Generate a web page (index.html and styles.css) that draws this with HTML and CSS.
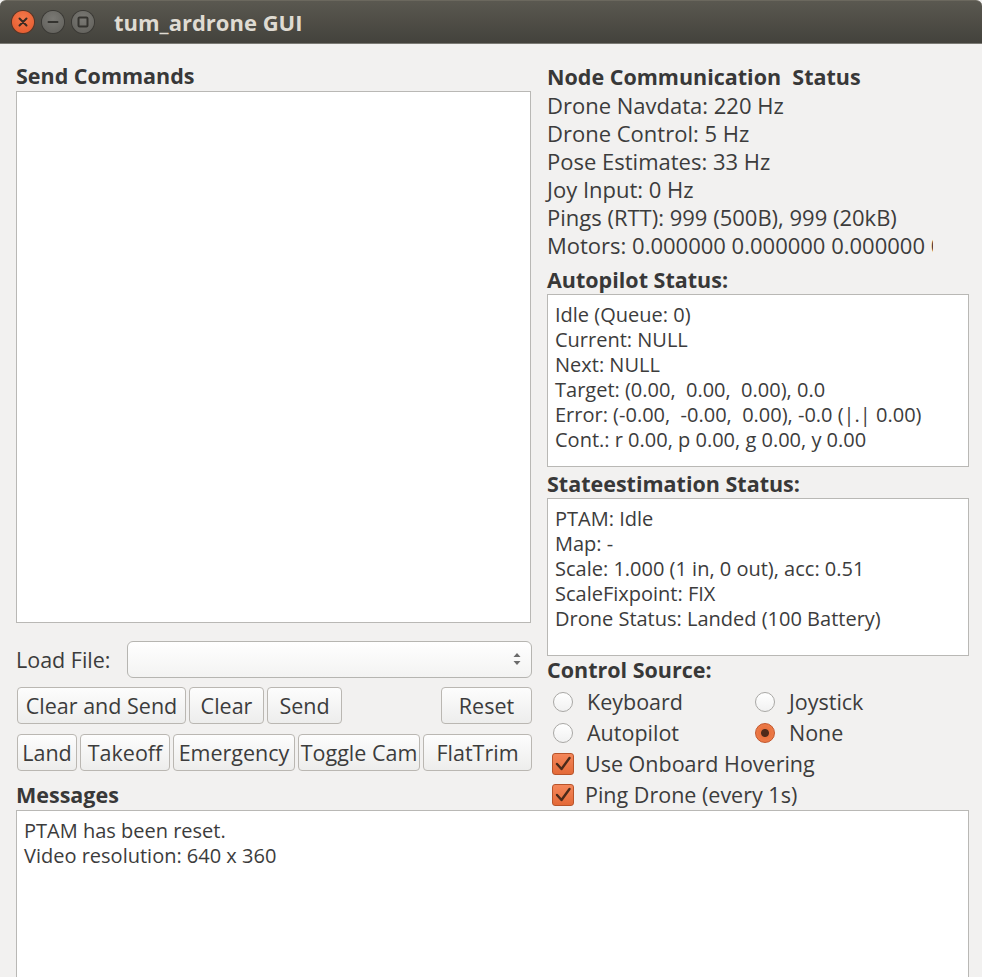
FILE: index.html
```html
<!DOCTYPE html>
<html>
<head>
<meta charset="utf-8">
<title>tum_ardrone GUI</title>
<link rel="stylesheet" href="styles.css">
</head>
<body>
<div class="window">
  <div class="titlebar">
    <div class="wbtns">
      <span class="wbtn close"><svg viewBox="0 0 22 22" width="22" height="22"><path d="M7.5 7.5 L14.5 14.5 M14.5 7.5 L7.5 14.5" stroke="#3a2a22" stroke-width="2" stroke-linecap="round"/></svg></span>
      <span class="wbtn"><svg viewBox="0 0 22 22" width="22" height="22"><path d="M6.5 11 H15.5" stroke="#34332f" stroke-width="2" stroke-linecap="round"/></svg></span>
      <span class="wbtn"><svg viewBox="0 0 22 22" width="22" height="22"><rect x="6.5" y="6.5" width="9" height="9" rx="1" fill="none" stroke="#34332f" stroke-width="2"/></svg></span>
    </div>
    <div class="title">tum_ardrone GUI</div>
  </div>
  <div class="content">
    <div class="top">
      <div class="left">
        <div class="heading">Send Commands</div>
        <div class="textbox cmds"></div>
        <div class="loadrow">
          <span class="label">Load File:</span>
          <div class="combo">
            <svg class="spin" viewBox="0 0 10 20" width="10" height="20"><path d="M1.5 8 L5 4 L8.5 8 Z M1.5 12 L5 16 L8.5 12 Z" fill="#6b6b6b"/></svg>
          </div>
        </div>
        <div class="btnrow row1">
          <button class="btn">Clear and Send</button>
          <button class="btn">Clear</button>
          <button class="btn">Send</button>
          <span></span>
          <button class="btn">Reset</button>
        </div>
        <div class="btnrow row2">
          <button class="btn">Land</button>
          <button class="btn">Takeoff</button>
          <button class="btn">Emergency</button>
          <button class="btn">Toggle Cam</button>
          <button class="btn">FlatTrim</button>
        </div>
        <div class="heading msgh">Messages</div>
      </div>
      <div class="right">
        <div class="heading">Node Communication&nbsp; Status</div>
        <div class="line">Drone Navdata: 220 Hz</div>
        <div class="line">Drone Control: 5 Hz</div>
        <div class="line">Pose Estimates: 33 Hz</div>
        <div class="line">Joy Input: 0 Hz</div>
        <div class="line">Pings (RTT): 999 (500B), 999 (20kB)</div>
        <div class="line clip">Motors: 0.000000 0.000000 0.000000 0.000000</div>
        <div class="heading sub first">Autopilot Status:</div>
        <div class="textbox status auto">
          <div>Idle (Queue: 0)</div>
          <div>Current: NULL</div>
          <div>Next: NULL</div>
          <div>Target: (0.00,&nbsp; 0.00,&nbsp; 0.00), 0.0</div>
          <div>Error: (-0.00,&nbsp; -0.00,&nbsp; 0.00), -0.0 (|.| 0.00)</div>
          <div>Cont.: r 0.00, p 0.00, g 0.00, y 0.00</div>
        </div>
        <div class="heading sub">Stateestimation Status:</div>
        <div class="textbox status state">
          <div>PTAM: Idle</div>
          <div>Map: -</div>
          <div>Scale: 1.000 (1 in, 0 out), acc: 0.51</div>
          <div>ScaleFixpoint: FIX</div>
          <div>Drone Status: Landed (100 Battery)</div>
        </div>
        <div class="heading sub last">Control Source:</div>
        <div class="radios">
          <div class="opt"><span class="radio"></span>Keyboard</div>
          <div class="opt"><span class="radio"></span>Joystick</div>
          <div class="opt"><span class="radio"></span>Autopilot</div>
          <div class="opt"><span class="radio on"></span>None</div>
        </div>
        <div class="opt"><span class="check"><svg viewBox="0 0 22 22" width="22" height="22"><path d="M5 11 L9.5 16 L17.5 5" fill="none" stroke="#4a2a1a" stroke-width="2.4" stroke-linecap="round" stroke-linejoin="round"/></svg></span>Use Onboard Hovering</div>
        <div class="opt"><span class="check"><svg viewBox="0 0 22 22" width="22" height="22"><path d="M5 11 L9.5 16 L17.5 5" fill="none" stroke="#4a2a1a" stroke-width="2.4" stroke-linecap="round" stroke-linejoin="round"/></svg></span>Ping Drone (every 1s)</div>
      </div>
    </div>
    <div class="textbox messages">
      <div>PTAM has been reset.</div>
      <div>Video resolution: 640 x 360</div>
    </div>
  </div>
</div>
</body>
</html>
```

FILE: styles.css
```css
html, body {
  margin: 0;
  padding: 0;
  height: 100%;
  overflow: hidden;
  background: #f2f1f0;
}
.window {
  font-family: "Open Sans", "Noto Sans", sans-serif;
  font-size: 21.5px;
  color: #3c3c3c;
  height: 977px;
  display: flex;
  flex-direction: column;
}
.titlebar {
  height: 42px;
  flex: none;
  background: linear-gradient(#5a5850, #43423c);
  border-top: 1px solid #6b685e;
  border-bottom: 1px solid #7b7a74;
  display: flex;
  align-items: center;
  border-radius: 6px 6px 0 0;
}
.wbtns {
  display: flex;
  gap: 8px;
  padding-left: 12px;
}
.wbtn {
  width: 22px;
  height: 22px;
  border-radius: 50%;
  background: radial-gradient(circle at 50% 35%, #7a7974, #5f5e59);
  box-shadow: 0 0 0 1px #3a3935;
  display: flex;
}
.wbtn.close {
  background: radial-gradient(circle at 50% 35%, #f47a4c, #e4562a);
  box-shadow: 0 0 0 1px #5a3322;
}
.title {
  margin-left: 20px;
  font-weight: bold;
  font-size: 22px;
  color: #dfdbd2;
}
.content {
  flex: 1;
  padding: 0 13px 0 16px;
  display: flex;
  flex-direction: column;
  min-height: 0;
}
.top {
  display: grid;
  grid-template-columns: 516px 422px;
  column-gap: 15px;
  flex: none;
}
.heading {
  font-weight: bold;
  font-size: 21.5px;
  height: 28px;
  line-height: 28px;
  white-space: nowrap;
  color: #383838;
}
.left {
  display: flex;
  flex-direction: column;
  padding-top: 18px;
}
.left > .heading:first-child {
  height: 29px;
}
.right {
  padding-top: 19px;
  display: flex;
  flex-direction: column;
  font-size: 22px;
}
.textbox {
  background: #ffffff;
  border: 1px solid #b9b8b5;
  box-sizing: border-box;
}
.cmds {
  height: 532px;
  width: 515px;
}
.loadrow {
  display: flex;
  align-items: center;
  margin-top: 17px;
  height: 38px;
}
.label {
  width: 111px;
  flex: none;
}
.combo {
  flex: 1;
  height: 37px;
  box-sizing: border-box;
  border: 1px solid #b6b5b1;
  border-radius: 6px;
  background: linear-gradient(#ffffff, #f3f3f2);
  display: flex;
  align-items: center;
  justify-content: flex-end;
  padding-right: 9px;
}
.btnrow {
  display: grid;
  column-gap: 3px;
  margin-top: 10px;
  height: 37px;
  margin-left: 1px;
}
.row1 {
  grid-template-columns: 169px 75px 75px 1fr 91px;
  margin-top: 9px;
}
.row2 {
  grid-template-columns: 60px 90px 122px 122px 1fr;
}
.btn {
  font: inherit;
  color: #3c3c3c;
  height: 37px;
  padding: 0;
  border: 1px solid #bab7b2;
  border-radius: 4px;
  background: linear-gradient(#fdfdfd, #ededec);
  white-space: nowrap;
  overflow: hidden;
}
.msgh {
  margin-top: 10px;
  height: 27px;
  line-height: 27px;
}
.line {
  height: 28px;
  line-height: 28px;
  white-space: nowrap;
}
.clip {
  width: 386px;
  overflow: hidden;
}
.right > .sub {
  margin-top: 3px;
}
.right > .sub.first {
  margin-top: 7px;
}
.right > .sub.last {
  margin-top: 0;
}
.status {
  padding: 7px 0 0 7px;
  line-height: 25px;
  font-size: 20px;
  white-space: nowrap;
}
.auto {
  height: 173px;
}
.state {
  height: 158px;
}
.radios {
  display: grid;
  grid-template-columns: 202px 1fr;
  margin-top: 2px;
}
.opt {
  height: 31px;
  display: flex;
  align-items: center;
  white-space: nowrap;
  font-size: 21.5px;
}
.radio {
  width: 20px;
  height: 20px;
  box-sizing: border-box;
  border-radius: 50%;
  border: 1px solid #a9a8a5;
  background: linear-gradient(#ffffff, #f1f1f1);
  margin: 0 14px 0 6px;
  flex: none;
}
.radio.on {
  border-color: #c3562b;
  background: radial-gradient(circle, #4e2a1a 0 3.5px, #e8713e 4.5px, #f08351 100%);
}
.check {
  width: 22px;
  height: 22px;
  box-sizing: border-box;
  border-radius: 3px;
  border: 1px solid #b8542a;
  background: linear-gradient(#f4875a, #e46a38);
  margin: 0 11px 0 5px;
  flex: none;
  display: flex;
}
.check svg {
  margin: -1px;
}
.messages {
  flex: 1;
  padding: 7px 0 0 7px;
  line-height: 25px;
  font-size: 20px;
  border-bottom: none;
  width: 953px;
}
```
